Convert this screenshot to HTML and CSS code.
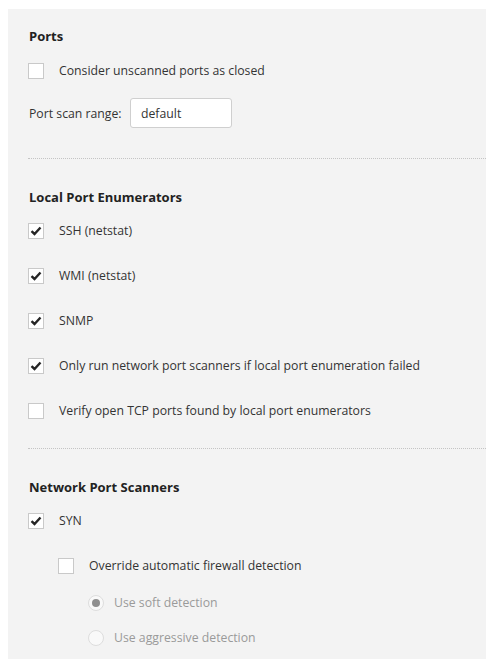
FILE: index.html
```html
<!DOCTYPE html>
<html>
<head>
<meta charset="utf-8">
<link rel="stylesheet" href="styles.css">
</head>
<body>
<div class="panel">
  <section class="section first">
    <h3 class="heading">Ports</h3>
    <label class="row">
      <span class="box"></span>
      <span class="label">Consider unscanned ports as closed</span>
    </label>
    <div class="range-row">
      <span class="range-label">Port scan range:</span>
      <span class="input">default</span>
    </div>
  </section>
  <div class="divider"></div>
  <section class="section">
    <h3 class="heading">Local Port Enumerators</h3>
    <label class="row">
      <span class="box checked"><svg viewBox="0 0 16 16" width="16" height="16"><path d="M3.5 8.2 L6.5 11 L12.5 4.5" fill="none" stroke="#262626" stroke-width="2.4"/></svg></span>
      <span class="label">SSH (netstat)</span>
    </label>
    <label class="row">
      <span class="box checked"><svg viewBox="0 0 16 16" width="16" height="16"><path d="M3.5 8.2 L6.5 11 L12.5 4.5" fill="none" stroke="#262626" stroke-width="2.4"/></svg></span>
      <span class="label">WMI (netstat)</span>
    </label>
    <label class="row">
      <span class="box checked"><svg viewBox="0 0 16 16" width="16" height="16"><path d="M3.5 8.2 L6.5 11 L12.5 4.5" fill="none" stroke="#262626" stroke-width="2.4"/></svg></span>
      <span class="label">SNMP</span>
    </label>
    <label class="row">
      <span class="box checked"><svg viewBox="0 0 16 16" width="16" height="16"><path d="M3.5 8.2 L6.5 11 L12.5 4.5" fill="none" stroke="#262626" stroke-width="2.4"/></svg></span>
      <span class="label">Only run network port scanners if local port enumeration failed</span>
    </label>
    <label class="row">
      <span class="box"></span>
      <span class="label">Verify open TCP ports found by local port enumerators</span>
    </label>
  </section>
  <div class="divider"></div>
  <section class="section">
    <h3 class="heading">Network Port Scanners</h3>
    <label class="row">
      <span class="box checked"><svg viewBox="0 0 16 16" width="16" height="16"><path d="M3.5 8.2 L6.5 11 L12.5 4.5" fill="none" stroke="#262626" stroke-width="2.4"/></svg></span>
      <span class="label">SYN</span>
    </label>
    <label class="row sub">
      <span class="box"></span>
      <span class="label">Override automatic firewall detection</span>
    </label>
    <label class="radio-row">
      <span class="radio on"></span>
      <span class="label disabled">Use soft detection</span>
    </label>
    <label class="radio-row">
      <span class="radio"></span>
      <span class="label disabled">Use aggressive detection</span>
    </label>
  </section>
</div>
</body>
</html>
```

FILE: styles.css
```css
html, body {
  margin: 0;
  padding: 0;
  background: #ffffff;
}
body {
  font-family: "Open Sans", "Noto Sans", sans-serif;
  font-size: 12.25px;
  color: #333333;
  height: 659px;
  overflow: hidden;
}
.panel {
  margin: 9px 0 0 8px;
  background: #f3f3f3;
  padding-left: 20px;
  min-height: 660px;
}
.section {
  display: flex;
  flex-direction: column;
  padding-top: 28px;
  padding-bottom: 15px;
}
.section.first {
  padding-top: 17px;
  padding-bottom: 30px;
}
.heading {
  margin: 0 0 1px 1px;
  font-size: 13px;
  font-weight: 700;
  line-height: 20px;
  height: 20px;
  color: #222222;
}
.first .heading {
  margin-bottom: 2px;
}
.row {
  display: flex;
  align-items: center;
  height: 45px;
  flex: none;
}
.row.sub {
  box-sizing: border-box;
  height: 42px;
  padding-top: 3px;
  padding-left: 30px;
}
.box {
  box-sizing: border-box;
  width: 16px;
  height: 16px;
  background: #ffffff;
  border: 1px solid #c9c9c9;
  flex: none;
  display: flex;
  align-items: center;
  justify-content: center;
}
.box svg {
  display: block;
  margin: -1px;
}
.label {
  margin-left: 15px;
  line-height: 16px;
}
.label.disabled {
  color: #9a9a9a;
  margin-left: 10px;
}
.range-row {
  display: flex;
  align-items: center;
  height: 30px;
  margin-top: 5px;
}
.range-label {
  margin-left: 1px;
  width: 101px;
}
.input {
  box-sizing: border-box;
  width: 102px;
  height: 30px;
  border: 1px solid #cfcfcf;
  border-radius: 3px;
  background: #ffffff;
  padding-left: 10px;
  display: flex;
  align-items: center;
  color: #333333;
}
.divider {
  border-top: 1px dotted #c4c4c4;
  height: 0;
}
.radio-row {
  display: flex;
  align-items: center;
  height: 35px;
  flex: none;
  padding-left: 60px;
}
.radio {
  box-sizing: border-box;
  width: 16px;
  height: 16px;
  border-radius: 50%;
  border: 1px solid #dddddd;
  background: #f9f9f9;
  flex: none;
  display: flex;
  align-items: center;
  justify-content: center;
}
.radio.on::after {
  content: "";
  width: 8px;
  height: 8px;
  border-radius: 50%;
  background: #8f8f8f;
}
```
